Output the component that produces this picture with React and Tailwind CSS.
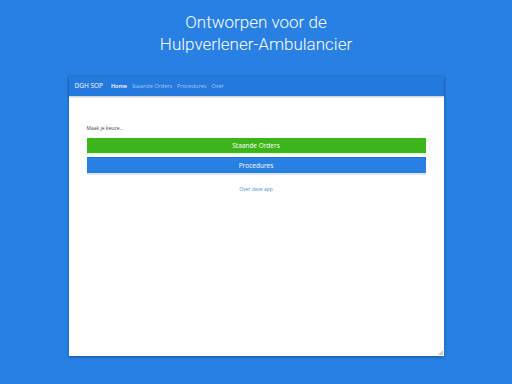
import React from "react";

const App = () => {
  return (
    <div className="w-[512px] h-[384px] bg-[#2780e2] flex flex-col items-center overflow-hidden">
      <h1 className="mt-[11px] text-center text-white text-[17px] leading-[22px] font-light font-['Roboto',sans-serif]">
        Ontworpen voor de
        <br />
        Hulpverlener-Ambulancier
      </h1>

      <div className="mt-[21px] w-[375px] h-[280px] bg-white flex flex-col shadow-[0_1px_3px_rgba(0,0,0,0.35)] relative">
        <nav className="h-[20px] bg-[#2479dc] flex items-center px-[6px] gap-[5px] font-['Open_Sans',sans-serif] text-[5.5px] shadow-[0_1px_2px_rgba(0,0,0,0.25)]">
          <span className="text-white text-[6.5px] mr-[3px]">DGH SOP</span>
          <span className="text-white font-semibold">Home</span>
          <span className="text-[#a9c9f2]">Staande Orders</span>
          <span className="text-[#a9c9f2]">Procedures</span>
          <span className="text-[#a9c9f2]">Over</span>
        </nav>

        <div className="flex flex-col px-[18px] pt-[28px] font-['Open_Sans',sans-serif]">
          <p className="text-[5px] text-[#444] leading-[8px]">Maak je keuze...</p>
          <button className="mt-[6px] h-[17px] bg-[#3cb51a] text-white text-[6.5px] border-b-[2px] border-[#e8f5e0]">
            Staande Orders
          </button>
          <button className="mt-[2px] h-[18px] bg-[#2780e2] text-white text-[6.5px] border-t border-[#1f6fcf] border-b-[2px] border-b-[#d8e8f8]">
            Procedures
          </button>
          <a className="mt-[11px] text-center text-[5px] text-[#4a8fe0]">Over deze app</a>
        </div>

        <div className="absolute right-[1px] bottom-[1px] w-0 h-0 border-l-[5px] border-l-transparent border-b-[5px] border-b-[#c8c8c8]" />
      </div>
    </div>
  );
};

export default App;
